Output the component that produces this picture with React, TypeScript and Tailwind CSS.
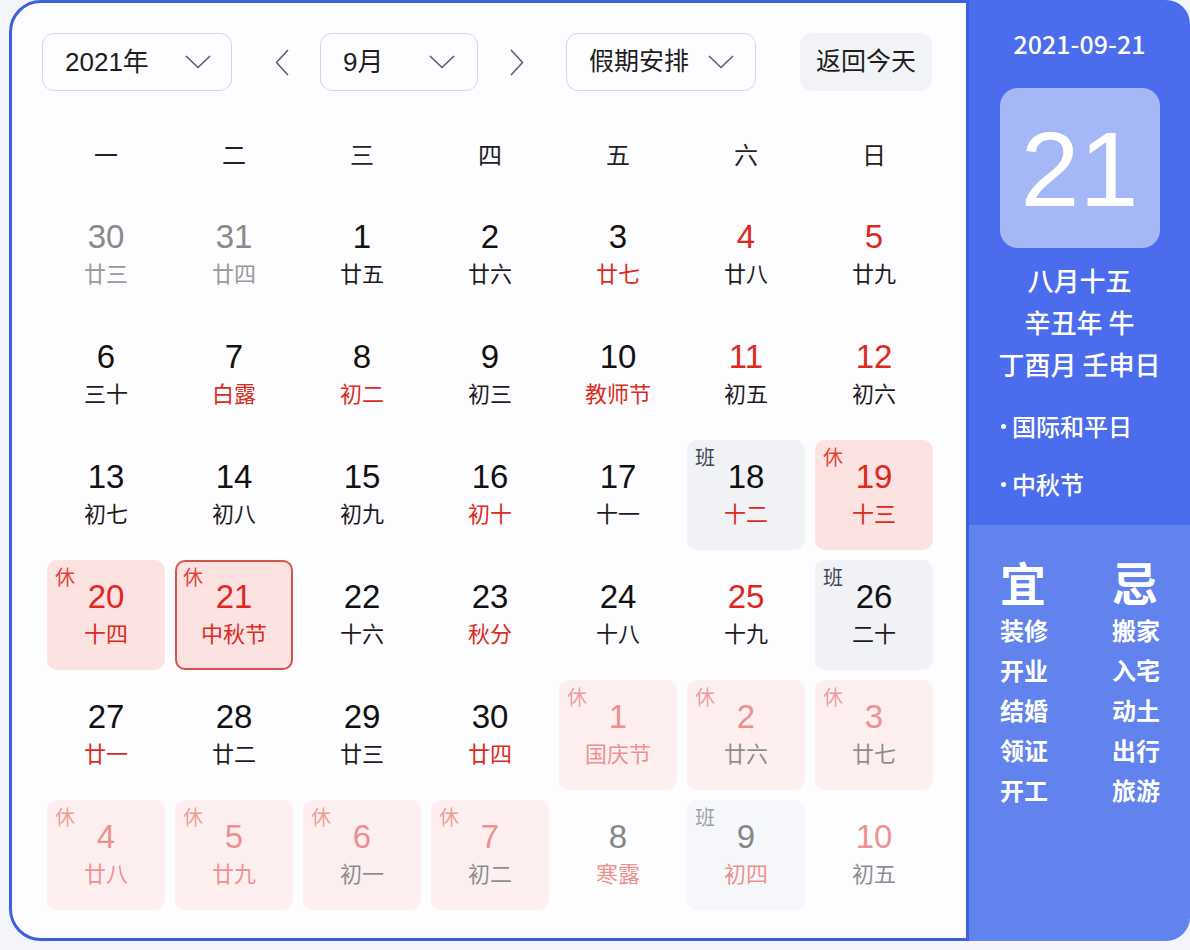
import React from "react";

type Cell = {
  d: number;
  l: string;
  nr?: boolean;
  lr?: boolean;
  tag?: "休" | "班";
  m?: "prev" | "next";
  sel?: boolean;
};

const cells: Cell[] = [
  { d: 30, l: "廿三", m: "prev" },
  { d: 31, l: "廿四", m: "prev" },
  { d: 1, l: "廿五" },
  { d: 2, l: "廿六" },
  { d: 3, l: "廿七", lr: true },
  { d: 4, l: "廿八", nr: true },
  { d: 5, l: "廿九", nr: true },

  { d: 6, l: "三十" },
  { d: 7, l: "白露", lr: true },
  { d: 8, l: "初二", lr: true },
  { d: 9, l: "初三" },
  { d: 10, l: "教师节", lr: true },
  { d: 11, l: "初五", nr: true },
  { d: 12, l: "初六", nr: true },

  { d: 13, l: "初七" },
  { d: 14, l: "初八" },
  { d: 15, l: "初九" },
  { d: 16, l: "初十", lr: true },
  { d: 17, l: "十一" },
  { d: 18, l: "十二", lr: true, tag: "班" },
  { d: 19, l: "十三", nr: true, lr: true, tag: "休" },

  { d: 20, l: "十四", nr: true, lr: true, tag: "休" },
  { d: 21, l: "中秋节", nr: true, lr: true, tag: "休", sel: true },
  { d: 22, l: "十六" },
  { d: 23, l: "秋分", lr: true },
  { d: 24, l: "十八" },
  { d: 25, l: "十九", nr: true },
  { d: 26, l: "二十", tag: "班" },

  { d: 27, l: "廿一", lr: true },
  { d: 28, l: "廿二" },
  { d: 29, l: "廿三" },
  { d: 30, l: "廿四", lr: true },
  { d: 1, l: "国庆节", nr: true, lr: true, tag: "休", m: "next" },
  { d: 2, l: "廿六", nr: true, tag: "休", m: "next" },
  { d: 3, l: "廿七", nr: true, tag: "休", m: "next" },

  { d: 4, l: "廿八", nr: true, lr: true, tag: "休", m: "next" },
  { d: 5, l: "廿九", nr: true, lr: true, tag: "休", m: "next" },
  { d: 6, l: "初一", nr: true, tag: "休", m: "next" },
  { d: 7, l: "初二", nr: true, tag: "休", m: "next" },
  { d: 8, l: "寒露", lr: true, m: "next" },
  { d: 9, l: "初四", lr: true, tag: "班", m: "next" },
  { d: 10, l: "初五", nr: true, m: "next" },
];

const weekdays = ["一", "二", "三", "四", "五", "六", "日"];

function Chevron() {
  return (
    <svg width="26" height="14" viewBox="0 0 26 14" fill="none">
      <polyline points="1.5,1.5 13,12.5 24.5,1.5" stroke="#5a6275" strokeWidth="1.7" strokeLinecap="round" strokeLinejoin="round" />
    </svg>
  );
}

function Arrow({ dir }: { dir: "l" | "r" }) {
  return (
    <svg width="14" height="27" viewBox="0 0 14 27" fill="none">
      <polyline
        points={dir === "l" ? "12.5,1.5 1.5,13.5 12.5,25.5" : "1.5,1.5 12.5,13.5 1.5,25.5"}
        stroke="#5a6275"
        strokeWidth="1.7"
        strokeLinecap="round"
        strokeLinejoin="round"
      />
    </svg>
  );
}

function DayCell({ c }: { c: Cell }) {
  const prev = c.m === "prev";
  const bg =
    c.tag === "休" ? "bg-[#fde2e2]" : c.tag === "班" ? "bg-[#f1f2f6]" : "bg-transparent";
  const numColor = prev ? "text-[#8a8a8a]" : c.nr ? "text-[#e0271e]" : "text-[#111111]";
  const lunColor = prev ? "text-[#9a9a9a]" : c.lr ? "text-[#dc2a20]" : "text-[#1c1c1c]";
  return (
    <div
      className={`relative h-[110px] w-[118px] rounded-[10px] ${bg} ${
        c.sel ? "border-2 border-[#d8524a]" : ""
      } ${c.m === "next" ? "opacity-50" : ""} flex flex-col items-center`}
    >
      {c.tag && (
        <span
          className={`absolute ${c.sel ? "left-[6px] top-[4px]" : "left-[8px] top-[6px]"} text-[20px] leading-[24px] ${
            c.tag === "休" ? "text-[#e0443a]" : "text-[#3f4558]"
          }`}
        >
          {c.tag}
        </span>
      )}
      <div className={`${c.sel ? "mt-[17px]" : "mt-[19px]"} text-[33px] leading-[36px] ${numColor} font-['Liberation_Sans','Noto_Sans_CJK_SC',sans-serif]`}>
        {c.d}
      </div>
      <div className={`mt-[6px] text-[22px] leading-[28px] ${lunColor}`}>{c.l}</div>
    </div>
  );
}

export default function App() {
  return (
    <div className="w-[1190px] h-[950px] bg-[#f4f5f9] font-['Liberation_Sans','Noto_Sans_CJK_SC',sans-serif] overflow-hidden">
      <div className="flex pl-[9px]">
        {/* Left calendar */}
        <div className="w-[960px] h-[941px] border-[3px] border-[#3a62de] rounded-l-[32px] bg-[#fdfdff] pt-[30px]">
          {/* Header */}
          <div className="flex items-center ml-[30px] h-[58px]">
            <div className="w-[190px] h-[58px] border border-[#d6d9df] rounded-[12px] flex items-center justify-between pl-[22px] pr-[20px]">
              <span className="text-[26px] text-[#1e1e1e]">2021年</span>
              <Chevron />
            </div>
            <div className="ml-[30px] w-[40px] flex justify-center">
              <Arrow dir="l" />
            </div>
            <div className="ml-[18px] w-[158px] h-[58px] border border-[#d6d9df] rounded-[12px] flex items-center justify-between pl-[22px] pr-[22px]">
              <span className="text-[26px] text-[#1e1e1e]">9月</span>
              <Chevron />
            </div>
            <div className="ml-[19px] w-[40px] flex justify-center">
              <Arrow dir="r" />
            </div>
            <div className="ml-[29px] w-[190px] h-[58px] border border-[#d6d9df] rounded-[12px] flex items-center justify-between pl-[22px] pr-[21px]">
              <span className="text-[25px] text-[#1e1e1e]">假期安排</span>
              <Chevron />
            </div>
            <div className="ml-[44px] w-[132px] h-[58px] rounded-[12px] bg-[#f2f3f6] flex items-center justify-center">
              <span className="text-[25px] text-[#1e1e1e]">返回今天</span>
            </div>
          </div>

          {/* Weekdays */}
          <div className="ml-[35px] mt-[43px] grid grid-cols-[repeat(7,118px)] gap-x-[10px] h-[44px]">
            {weekdays.map((w) => (
              <div key={w} className="text-center text-[24px] leading-[44px] text-[#222222]">
                {w}
              </div>
            ))}
          </div>

          {/* Days */}
          <div className="ml-[35px] mt-[22px] grid grid-cols-[repeat(7,118px)] gap-[10px]">
            {cells.map((c, i) => (
              <DayCell key={i} c={c} />
            ))}
          </div>
        </div>

        {/* Right panel */}
        <div className="w-[221px] h-[941px] rounded-r-[24px] overflow-hidden flex flex-col text-white font-['Noto_Sans_CJK_SC',sans-serif]">
          <div className="h-[525px] bg-[#4a6ced] flex flex-col items-center pt-[28px]">
            <div className="text-[25px] leading-[30px] font-medium">2021-09-21</div>
            <div className="mt-[30px] w-[160px] h-[160px] rounded-[18px] bg-[#a5b7f6] flex items-center justify-center">
              <span className="text-[106px] leading-none font-['Liberation_Sans',sans-serif] mt-[2px]">21</span>
            </div>
            <div className="mt-[11px] text-[26px] leading-[42px] font-medium">八月十五</div>
            <div className="text-[26px] leading-[42px] font-medium">辛丑年 牛</div>
            <div className="text-[26px] leading-[42px] font-medium">丁酉月 壬申日</div>
            <div className="self-start ml-[32px] mt-[21px] flex items-center h-[40px]">
              <span className="w-[5px] h-[5px] rounded-full bg-white mr-[6px]" />
              <span className="text-[24px] leading-[40px] font-medium">国际和平日</span>
            </div>
            <div className="self-start ml-[32px] mt-[18px] flex items-center h-[40px]">
              <span className="w-[5px] h-[5px] rounded-full bg-white mr-[6px]" />
              <span className="text-[24px] leading-[40px] font-medium">中秋节</span>
            </div>
          </div>
          <div className="flex-1 bg-[#6282ed] pl-[31px] pt-[31px] grid grid-cols-[112px_1fr] content-start">
            <div className="flex flex-col">
              <div className="text-[46px] leading-[50px] font-bold">宜</div>
              <div className="mt-[4px] flex flex-col text-[24px] leading-[40px] font-bold">
                <span>装修</span>
                <span>开业</span>
                <span>结婚</span>
                <span>领证</span>
                <span>开工</span>
              </div>
            </div>
            <div className="flex flex-col">
              <div className="text-[46px] leading-[50px] font-bold">忌</div>
              <div className="mt-[4px] flex flex-col text-[24px] leading-[40px] font-bold">
                <span>搬家</span>
                <span>入宅</span>
                <span>动土</span>
                <span>出行</span>
                <span>旅游</span>
              </div>
            </div>
          </div>
        </div>
      </div>
    </div>
  );
}
